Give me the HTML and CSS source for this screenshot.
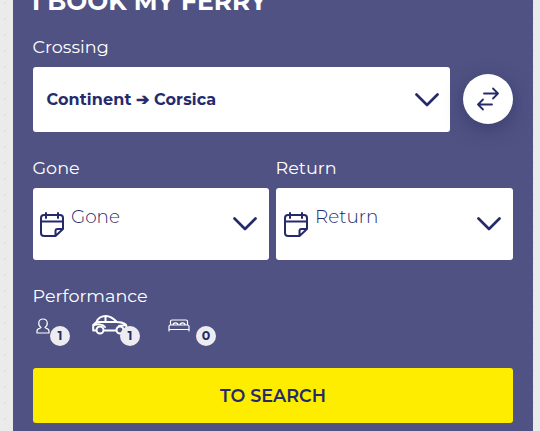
FILE: index.html
```
<!DOCTYPE html><html lang="en"><head><meta charset="utf-8"><meta name="viewport" content="width=device-width">
<title>I book my ferry</title>
<link rel="stylesheet" href="styles.css">
</head>
<body>

<svg class="defs">
	<symbol id="chevron" viewBox="0 0 24 14"><path d="M1.500 1.500L12 12L22.500 1.500"/></symbol>
	<symbol id="calendar" viewBox="0 0 24 26">
		<path d="M15.500 24H4a3 3 0 0 1-3-3V6a3 3 0 0 1 3-3h16a3 3 0 0 1 3 3v11zM1 9.500h22M6 1v5M18 1v5M15.500 24v-5a2 2 0 0 1 2-2H23"/>
	</symbol>
</svg>

<div class="panel">
	<h1>I BOOK MY FERRY</h1>

	<div class="label">Crossing</div>
	<div class="row">
		<div class="field route"><span class="routename">Continent ➔ Corsica</span><svg class="chevron"><use href="#chevron"/></svg></div>
		<button class="swap"><svg viewBox="0 0 24 24"><path d="M8 7h14M17 2l5 5l-5 5M16 18H2M7 13l-5 5l5 5"/></svg></button>
	</div>

	<div class="dates">
		<div>
			<div class="label">Gone</div>
			<div class="field date"><svg class="calendar"><use href="#calendar"/></svg><span class="datename">Gone</span><svg class="chevron"><use href="#chevron"/></svg></div>
		</div>
		<div>
			<div class="label">Return</div>
			<div class="field date return"><svg class="calendar"><use href="#calendar"/></svg><span class="datename">Return</span><svg class="chevron"><use href="#chevron"/></svg></div>
		</div>
	</div>

	<div class="label performance">Performance</div>
	<div class="services">
		<div class="service person">
			<svg viewBox="0 0 14 16"><path d="M5 9.500C1.500 7 2 1 7 1s5.500 6 2 8.500c.2 1 4 .5 4 3.500v2H1v-2c0-3 3.800-2.500 4-3.500z"/></svg>
			<span class="count">1</span>
		</div>
		<div class="service car">
			<svg viewBox="0 0 36 20"><path d="M4 15.500H1.200V10L4.500 7C6 3 9.500 1 14 1c4.500 0 7.500 2.500 11 6 5 .3 9.500 1 9.500 4.500v4h-2M12 15.500h12M4.500 7H25M13.500 1v6M1.500 10.500C5 8.500 11 9 13 12M34 10l-7 1"/><circle cx="8" cy="15" r="3.500"/><circle cx="28" cy="15" r="3.500"/></svg>
			<span class="count">1</span>
		</div>
		<div class="service bed">
			<svg viewBox="0 0 22 13"><path d="M2.500 6V2.500Q2.500 1 4 1h14q1.500 0 1.500 1.500V6M1 12V7.500Q1 6 2.500 6h17Q21 6 21 7.500V12M1 10.500h20M5 6Q5 3.800 7.500 3.800T10 6M12 6Q12 3.800 14.500 3.800T17 6"/></svg>
			<span class="count">0</span>
		</div>
	</div>

	<button class="search">TO SEARCH</button>
</div>

</body>
</html>
```

FILE: styles.css
```
body {
	margin: 0px;
	padding: 0 7px 0 13px;
	height: 431px;
	overflow: hidden;
	background-color: #ebebeb;
	background-image: radial-gradient(circle, #d8d8d8 .6px, transparent .8px);
	background-size: 16px 16px;
	background-position: -3px -5px;
	font-family: Montserrat, Inter, sans-serif;
	color: #252a6b;
}
.defs {
	display: none;
}
.panel {
	box-sizing: border-box;
	height: 431px;
	padding: 0 20px;
	background: #4f5283;
}
h1 {
	margin: 0 0 0 -1px;
	height: 37px;
	line-height: 2px;
	font-size: 24.9px;
	font-weight: 700;
	white-space: nowrap;
	color: white;
}
.label {
	height: 30px;
	line-height: 19px;
	font-size: 17.6px;
	margin-left: -.5px;
	color: white;
}
svg {
	fill: none;
	stroke: currentColor;
	stroke-width: 2;
	stroke-linecap: round;
	stroke-linejoin: round;
}
.row {
	display: flex;
	align-items: center;
	gap: 13px;
}
.field {
	box-sizing: border-box;
	display: flex;
	align-items: center;
	background: white;
	border-radius: 3px;
}
.route {
	flex: 1;
	height: 65px;
	padding: 0 11px 0 14px;
}
.routename {
	margin-left: -.5px;
	font-size: 16px;
	font-weight: 700;
	letter-spacing: .14px;
	white-space: nowrap;
}
.chevron {
	width: 24px;
	height: 14px;
	margin-left: auto;
	stroke-width: 2.7;
}
.swap {
	display: flex;
	align-items: center;
	justify-content: center;
	width: 50px;
	height: 50px;
	margin-bottom: 2px;
	padding: 0;
	border: none;
	border-radius: 50%;
	background: white;
	color: #252a6b;
	box-shadow: 0 5px 18px rgba(37, 42, 90, .5);
}
.swap svg {
	width: 24px;
	height: 25px;
	stroke-width: 1.8;
}
.dates {
	display: grid;
	grid-template-columns: 236px 237px;
	gap: 7px;
	margin: 26px 0;
}
.date {
	height: 72px;
	padding: 0 12px 0 7px;
}
.return {
	padding-left: 8px;
}
.calendar {
	width: 24px;
	height: 26px;
	margin-top: 2px;
}
.datename {
	margin: -16px 0 0 7px;
	font-size: 18.4px;
	font-weight: 300;
}
.performance {
	height: 29px;
}
.services {
	display: flex;
	height: 53px;
}
.service {
	position: relative;
}
.service svg {
	display: block;
	color: white;
}
.person {
	width: 59px;
}
.person svg {
	width: 14px;
	height: 16px;
	margin: 3px 0 0 3px;
	stroke-width: 1.2;
}
.car {
	width: 76px;
}
.car svg {
	width: 36px;
	height: 20px;
}
.bed svg {
	width: 22px;
	height: 13px;
	margin-top: 4px;
	stroke-width: 1.2;
}
/* number badge over each icon */
.count {
	position: absolute;
	top: 11px;
	left: 17px;
	width: 20px;
	height: 20px;
	border-radius: 50%;
	background: #ededf1;
	text-align: center;
	line-height: 20px;
	font-size: 12.5px;
	font-weight: 700;
}
.car .count, .bed .count {
	left: 28px;
}
.search {
	display: block;
	width: 100%;
	height: 55px;
	padding: 0;
	border: none;
	border-radius: 3px;
	background: #ffed00;
	color: #252a6b;
	font-family: inherit;
	font-size: 17.6px;
	font-weight: 600;
}
```
